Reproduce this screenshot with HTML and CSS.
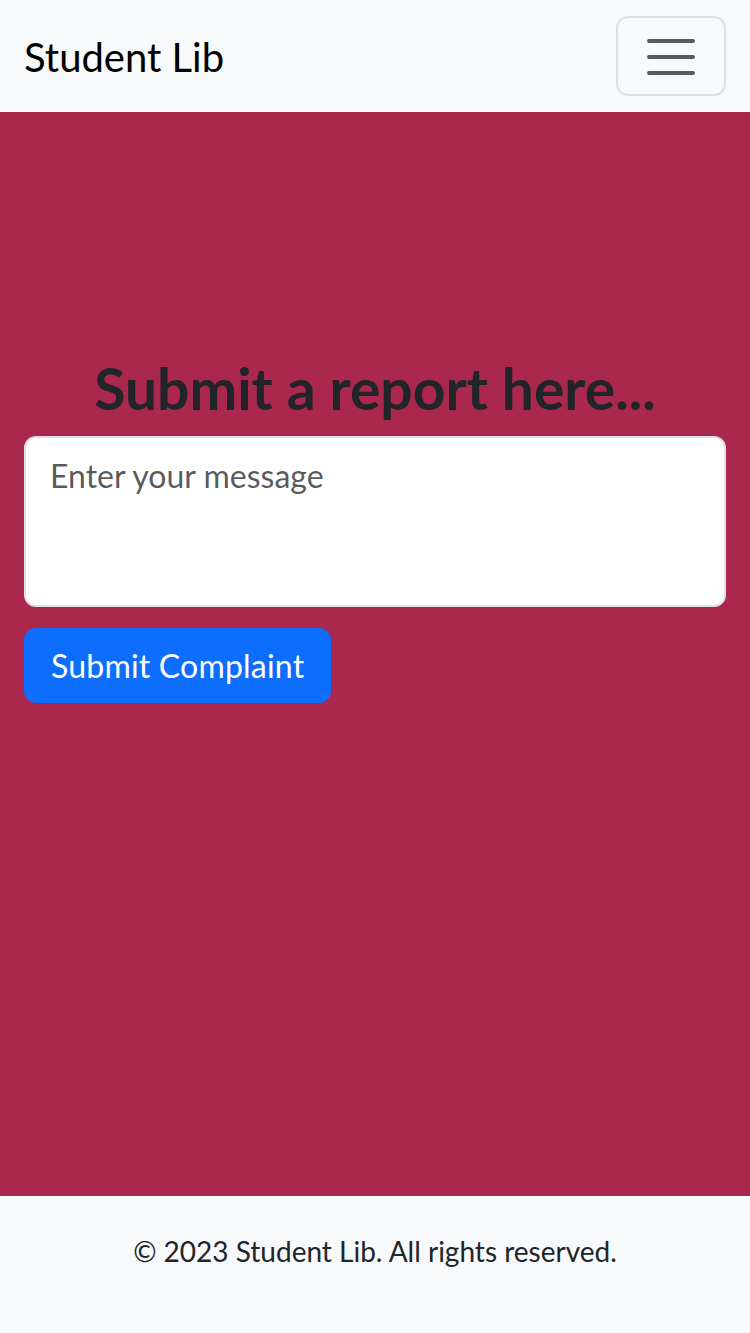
FILE: index.html
```html
<!DOCTYPE html>
<html lang="en">
<head>
<meta charset="utf-8">
<title>Student Lib</title>
<link rel="stylesheet" href="styles.css">
</head>
<body>
<nav class="navbar">
  <a class="brand" href="#">Student Lib</a>
  <button class="toggler" type="button" aria-label="Toggle navigation">
    <svg class="toggler-icon" viewBox="0 0 60 60" width="60" height="60">
      <path d="M8 15h44M8 31h44M8 47h44" stroke="#595c5f" stroke-width="4" stroke-linecap="round" fill="none"/>
    </svg>
  </button>
</nav>
<main class="main">
  <div class="container">
    <h2 class="title">Submit a report here...</h2>
    <form class="form">
      <textarea class="field" rows="3" placeholder="Enter your message"></textarea>
      <button class="btn" type="submit">Submit Complaint</button>
    </form>
  </div>
</main>
<footer class="footer">
  <p class="copy">© 2023 Student Lib. All rights reserved.</p>
</footer>
</body>
</html>
```

FILE: styles.css
```css
* { box-sizing: border-box; }
html, body { margin: 0; padding: 0; }
body {
  font-family: Lato, "Noto Sans", "Liberation Sans", sans-serif;
  color: #212529;
  background: #f8f9fa;
  width: 750px;
  height: 1333px;
  display: flex;
  flex-direction: column;
}
.navbar {
  height: 112px;
  background: #f8f9fa;
  display: flex;
  align-items: center;
  justify-content: space-between;
  padding: 0 24px;
}
.brand {
  font-size: 40px;
  color: #000;
  text-decoration: none;
  line-height: 1;
  padding-top: 2px;
}
.toggler {
  width: 110px;
  height: 80px;
  border: 2px solid rgba(0,0,0,0.1);
  border-radius: 12px;
  background: transparent;
  display: flex;
  align-items: center;
  justify-content: center;
  padding: 0;
}
.toggler-icon { display: block; }
.main {
  height: 1084px;
  background: #aa274d;
  padding-top: 242px;
}
.container { padding: 0 24px; }
.title {
  margin: 0 0 14px;
  font-size: 57px;
  line-height: 68px;
  font-weight: 700;
  text-align: center;
  color: #212529;
}
.form { display: flex; flex-direction: column; align-items: flex-start; }
.field {
  display: block;
  width: 100%;
  height: 171px;
  padding: 14px 24px 10px;
  font-family: inherit;
  font-size: 32px;
  line-height: 48px;
  color: #212529;
  background: #fff;
  border: 2px solid #dee2e6;
  border-radius: 12px;
  resize: none;
}
.field::placeholder { color: rgba(33,37,41,0.75); }
.btn {
  margin-top: 21px;
  height: 75px;
  padding: 0 25px;
  font-family: inherit;
  font-size: 32px;
  letter-spacing: 0.2px;
  color: #fff;
  background: #0d6efd;
  border: 2px solid #0d6efd;
  border-radius: 12px;
}
.footer {
  flex: 1;
  background: #f8f9fa;
  padding-top: 34px;
}
.copy {
  margin: 0;
  text-align: center;
  font-size: 28px;
  line-height: 42px;
  color: #212529;
}
```
